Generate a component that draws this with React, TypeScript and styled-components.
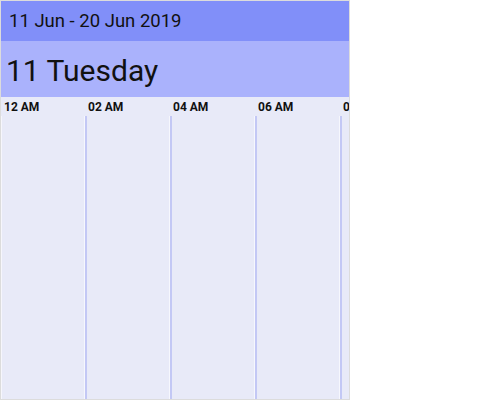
import React from "react";
import styled, { createGlobalStyle } from "styled-components";

const GlobalStyle = createGlobalStyle`
  html, body {
    margin: 0;
    padding: 0;
    background: #fff;
    font-family: Roboto, "Liberation Sans", sans-serif;
  }
`;

const Scheduler = styled.div`
  width: 350px;
  height: 400px;
  box-sizing: border-box;
  border: 1px solid #dcdcdc;
  display: flex;
  flex-direction: column;
  overflow: hidden;
  background: #e8eaf8;
`;

const RangeBar = styled.div`
  height: 40px;
  flex: none;
  background: #818ff9;
  color: #111;
  font-size: 18.5px;
  display: flex;
  align-items: center;
  padding-left: 8px;
`;

const DayBar = styled.div`
  height: 56px;
  flex: none;
  background: #aab2fc;
  color: #111;
  font-size: 30px;
  display: flex;
  align-items: center;
  padding-left: 5px;
  padding-top: 2px;
  box-sizing: border-box;
`;

const Timeline = styled.div`
  flex: 1;
  display: flex;
  min-height: 0;
`;

const Slot = styled.div<{ $first?: boolean }>`
  width: ${(p) => (p.$first ? 84 : 85)}px;
  flex: none;
  display: flex;
  flex-direction: column;
`;

const SlotLabel = styled.div`
  height: 19px;
  flex: none;
  font-size: 12px;
  font-weight: 700;
  color: #111;
  padding-left: 3px;
  display: flex;
  align-items: center;
  white-space: nowrap;
`;

const SlotBody = styled.div<{ $first?: boolean }>`
  flex: 1;
  border-left: ${(p) => (p.$first ? "1px solid #f6f6fc" : "2px solid #c3c8f5")};
  border-right: 1px solid #f6f7fd;
`;

const hours = ["12 AM", "02 AM", "04 AM", "06 AM", "08 AM"];

const App: React.FC = () => {
  return (
    <>
      <GlobalStyle />
      <Scheduler>
        <RangeBar>11 Jun - 20 Jun 2019</RangeBar>
        <DayBar>11 Tuesday</DayBar>
        <Timeline>
          {hours.map((h, i) => (
            <Slot key={h} $first={i === 0}>
              <SlotLabel>{h}</SlotLabel>
              <SlotBody $first={i === 0} />
            </Slot>
          ))}
        </Timeline>
      </Scheduler>
    </>
  );
};

export default App;
